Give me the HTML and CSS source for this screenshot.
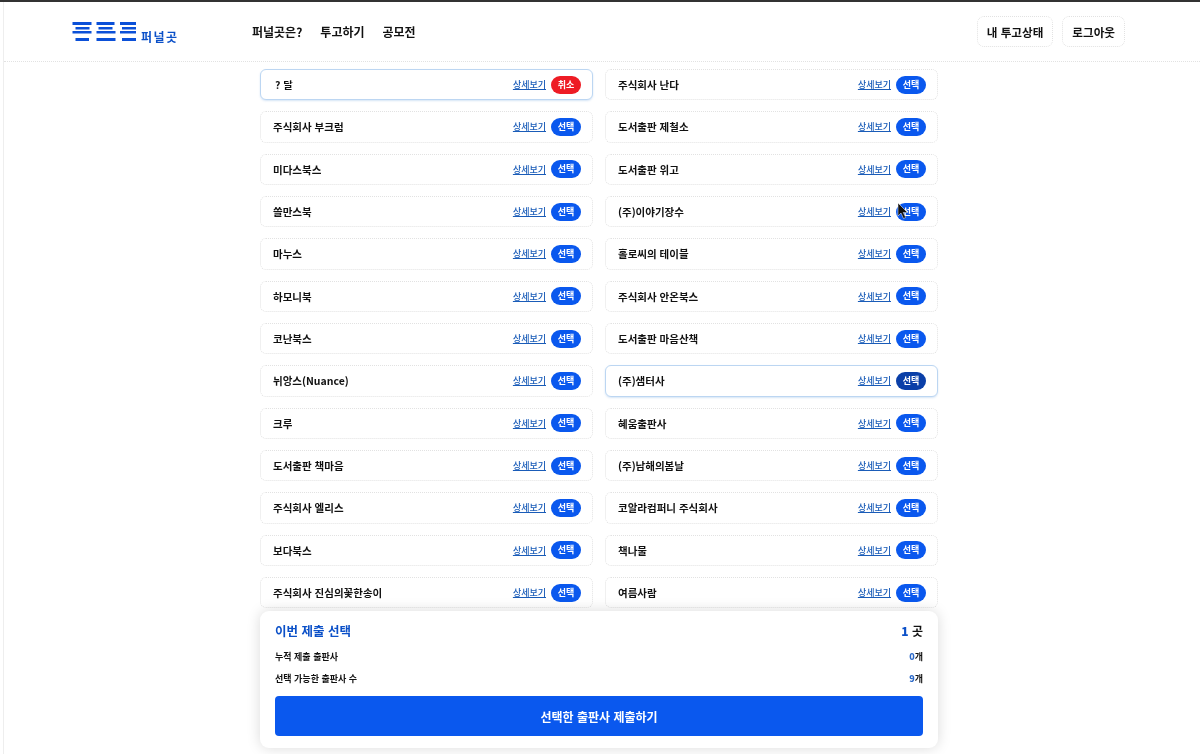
FILE: index.html
```html
<!DOCTYPE html>
<html lang="ko">
<head>
<meta charset="utf-8">
<title>퍼널곳</title>
<link rel="stylesheet" href="styles.css">
</head>
<body>
<div class="shell">
  <header class="header">
    <div class="brand">
      <svg class="logo" width="65" height="21" viewBox="0 0 65 21" aria-hidden="true">
        <g fill="#0b50d8">
          <rect x="0.500" y="1" width="19" height="3"/><rect x="3.500" y="6" width="14" height="2.500"/><rect x="0.500" y="10" width="19" height="2.500"/><rect x="3.500" y="17" width="13.500" height="3"/>
          <rect x="24.500" y="1" width="18" height="3"/><rect x="26.500" y="6" width="14" height="2.500"/><rect x="24.500" y="10" width="19" height="2.500"/><rect x="24.500" y="17" width="19" height="3"/>
          <rect x="48" y="1" width="16" height="3"/><rect x="50" y="6" width="14" height="2.500"/><rect x="48" y="10" width="16" height="2.500"/><rect x="50" y="17" width="14" height="3"/>
        </g>
      </svg>
      <span class="brand-name">퍼널곳</span>
    </div>
    <nav class="nav">
      <a>퍼널곳은?</a>
      <a>투고하기</a>
      <a>공모전</a>
    </nav>
    <div class="actions">
      <button class="ghost">내 투고상태</button>
      <button class="ghost">로그아웃</button>
    </div>
  </header>
  <main class="list">
    <div class="card active"><span class="name lead">? 달</span><a class="more">상세보기</a><button class="pick cancel">취소</button></div>
    <div class="card"><span class="name">주식회사 난다</span><a class="more">상세보기</a><button class="pick">선택</button></div>
    <div class="card"><span class="name">주식회사 부크럼</span><a class="more">상세보기</a><button class="pick">선택</button></div>
    <div class="card"><span class="name">도서출판 제철소</span><a class="more">상세보기</a><button class="pick">선택</button></div>
    <div class="card"><span class="name">미다스북스</span><a class="more">상세보기</a><button class="pick">선택</button></div>
    <div class="card"><span class="name">도서출판 위고</span><a class="more">상세보기</a><button class="pick">선택</button></div>
    <div class="card"><span class="name">쏠만스북</span><a class="more">상세보기</a><button class="pick">선택</button></div>
    <div class="card"><span class="name">(주)이야기장수</span><a class="more">상세보기</a>
      <button class="pick">선택<svg class="cursor" width="12" height="18" viewBox="0 0 12 18" aria-hidden="true"><path d="M1 1v13l3-3 2.500 5.500 2.200-1L6.200 10.500h4.300z" fill="#111" stroke="#fff" stroke-width=".5"/></svg></button></div>
    <div class="card"><span class="name">마누스</span><a class="more">상세보기</a><button class="pick">선택</button></div>
    <div class="card"><span class="name">홀로씨의 테이블</span><a class="more">상세보기</a><button class="pick">선택</button></div>
    <div class="card"><span class="name">하모니북</span><a class="more">상세보기</a><button class="pick">선택</button></div>
    <div class="card"><span class="name">주식회사 안온북스</span><a class="more">상세보기</a><button class="pick">선택</button></div>
    <div class="card"><span class="name">코난북스</span><a class="more">상세보기</a><button class="pick">선택</button></div>
    <div class="card"><span class="name">도서출판 마음산책</span><a class="more">상세보기</a><button class="pick">선택</button></div>
    <div class="card"><span class="name">뉘앙스(Nuance)</span><a class="more">상세보기</a><button class="pick">선택</button></div>
    <div class="card active"><span class="name">(주)샘터사</span><a class="more">상세보기</a><button class="pick hover">선택</button></div>
    <div class="card"><span class="name">크루</span><a class="more">상세보기</a><button class="pick">선택</button></div>
    <div class="card"><span class="name">혜움출판사</span><a class="more">상세보기</a><button class="pick">선택</button></div>
    <div class="card"><span class="name">도서출판 책마음</span><a class="more">상세보기</a><button class="pick">선택</button></div>
    <div class="card"><span class="name">(주)남해의봄날</span><a class="more">상세보기</a><button class="pick">선택</button></div>
    <div class="card"><span class="name">주식회사 엘리스</span><a class="more">상세보기</a><button class="pick">선택</button></div>
    <div class="card"><span class="name">코알라컴퍼니 주식회사</span><a class="more">상세보기</a><button class="pick">선택</button></div>
    <div class="card"><span class="name">보다북스</span><a class="more">상세보기</a><button class="pick">선택</button></div>
    <div class="card"><span class="name">책나물</span><a class="more">상세보기</a><button class="pick">선택</button></div>
    <div class="card"><span class="name">주식회사 진심의꽃한송이</span><a class="more">상세보기</a><button class="pick">선택</button></div>
    <div class="card"><span class="name">여름사람</span><a class="more">상세보기</a><button class="pick">선택</button></div>
  </main>
  <section class="panel">
    <div class="row head"><span class="title">이번 제출 선택</span><span class="total"><b>1</b> 곳</span></div>
    <div class="row stat"><span>누적 제출 출판사</span><span><b>0</b>개</span></div>
    <div class="row stat"><span>선택 가능한 출판사 수</span><span><b>9</b>개</span></div>
    <button class="submit">선택한 출판사 제출하기</button>
  </section>
</div>
</body>
</html>
```
FILE: styles.css
```css
* { box-sizing: border-box; }
html, body { margin: 0; height: 100%; overflow: hidden; background: #fff; }
body {
  font-family: "Noto Sans CJK KR", "Noto Sans", sans-serif;
  color: #111;
  border-top: 2px solid #333;
}
button { font-family: inherit; cursor: pointer; }
.shell {
  position: relative;
  height: 752px;
  margin-left: 3px;
  border-left: 1px solid #eee;
  padding-right: 6px;
  overflow: hidden;
  filter: blur(.3px);
}
.header {
  display: flex;
  align-items: center;
  height: 60px;
  margin-right: -6px;
  padding: 0 75px 0 68px;
  border-bottom: 1px dotted #e2e2e2;
}
.brand { display: flex; align-items: flex-end; gap: 4px; width: 180px; }
.logo { display: block; }
.brand-name { font-size: 12px; line-height: 11px; font-weight: 700; color: #0b50c8; letter-spacing: 1.400px; }
.nav { display: flex; gap: 18px; font-size: 12px; font-weight: 700; }
.actions { display: flex; gap: 9px; margin-left: auto; }
.ghost {
  height: 31px;
  padding: 0 9px;
  background: #fff;
  border: 1px dotted #e2e2e2;
  border-radius: 7px;
  font-size: 11.600px;
  font-weight: 700;
  color: #111;
}
.list {
  display: grid;
  grid-template-columns: 333px 333px;
  column-gap: 12px;
  row-gap: 11px;
  justify-content: center;
  padding-top: 7px;
}
.card {
  display: flex;
  align-items: center;
  height: 31.330px;
  padding: 0 11px 0 12px;
  background: #fff;
  border: 1px dotted #e2e2e2;
  border-radius: 6px;
}
.card.active { border: 1px solid #bcd6f2; box-shadow: 0 1px 2px rgba(90, 150, 220, .25); }
.name { flex: 1; font-size: 10.500px; font-weight: 700; white-space: nowrap; }
.name.lead { padding-left: 2px; }
.more { font-size: 9px; font-weight: 500; color: #1a5cb8; text-decoration: underline; margin-right: 5px; }
.pick {
  position: relative;
  width: 30px;
  height: 18px;
  padding: 0;
  border: 0;
  border-radius: 9px;
  background: #0a58ee;
  color: #fff;
  font-size: 9px;
  font-weight: 700;
  line-height: 18px;
}
.pick.cancel { background: #ee1c25; }
.pick.hover { background: #0a3fa8; }
.cursor { position: absolute; left: 1px; top: -1px; }
.panel {
  position: absolute;
  left: 256px;
  top: 609px;
  width: 678px;
  height: 137px;
  padding: 10px 15px;
  background: #fff;
  border-radius: 9px;
  box-shadow: 0 0 14px rgba(0, 0, 0, .15);
}
.row { display: flex; justify-content: space-between; align-items: center; }
.head { height: 18px; }
.title { font-size: 12.500px; font-weight: 700; color: #0b50c8; }
.total { font-size: 12px; font-weight: 700; }
.total b { color: #0b50c8; }
.stat { height: 12px; font-size: 9px; font-weight: 700; margin-top: 10px; }
.stat:nth-of-type(2) { margin-top: 11px; }
.stat b { color: #2a68c8; }
.submit {
  display: block;
  width: 100%;
  height: 40px;
  margin-top: 12px;
  border: 0;
  border-radius: 4px;
  background: #0a58ee;
  color: #fff;
  font-size: 12px;
  font-weight: 700;
}
```
